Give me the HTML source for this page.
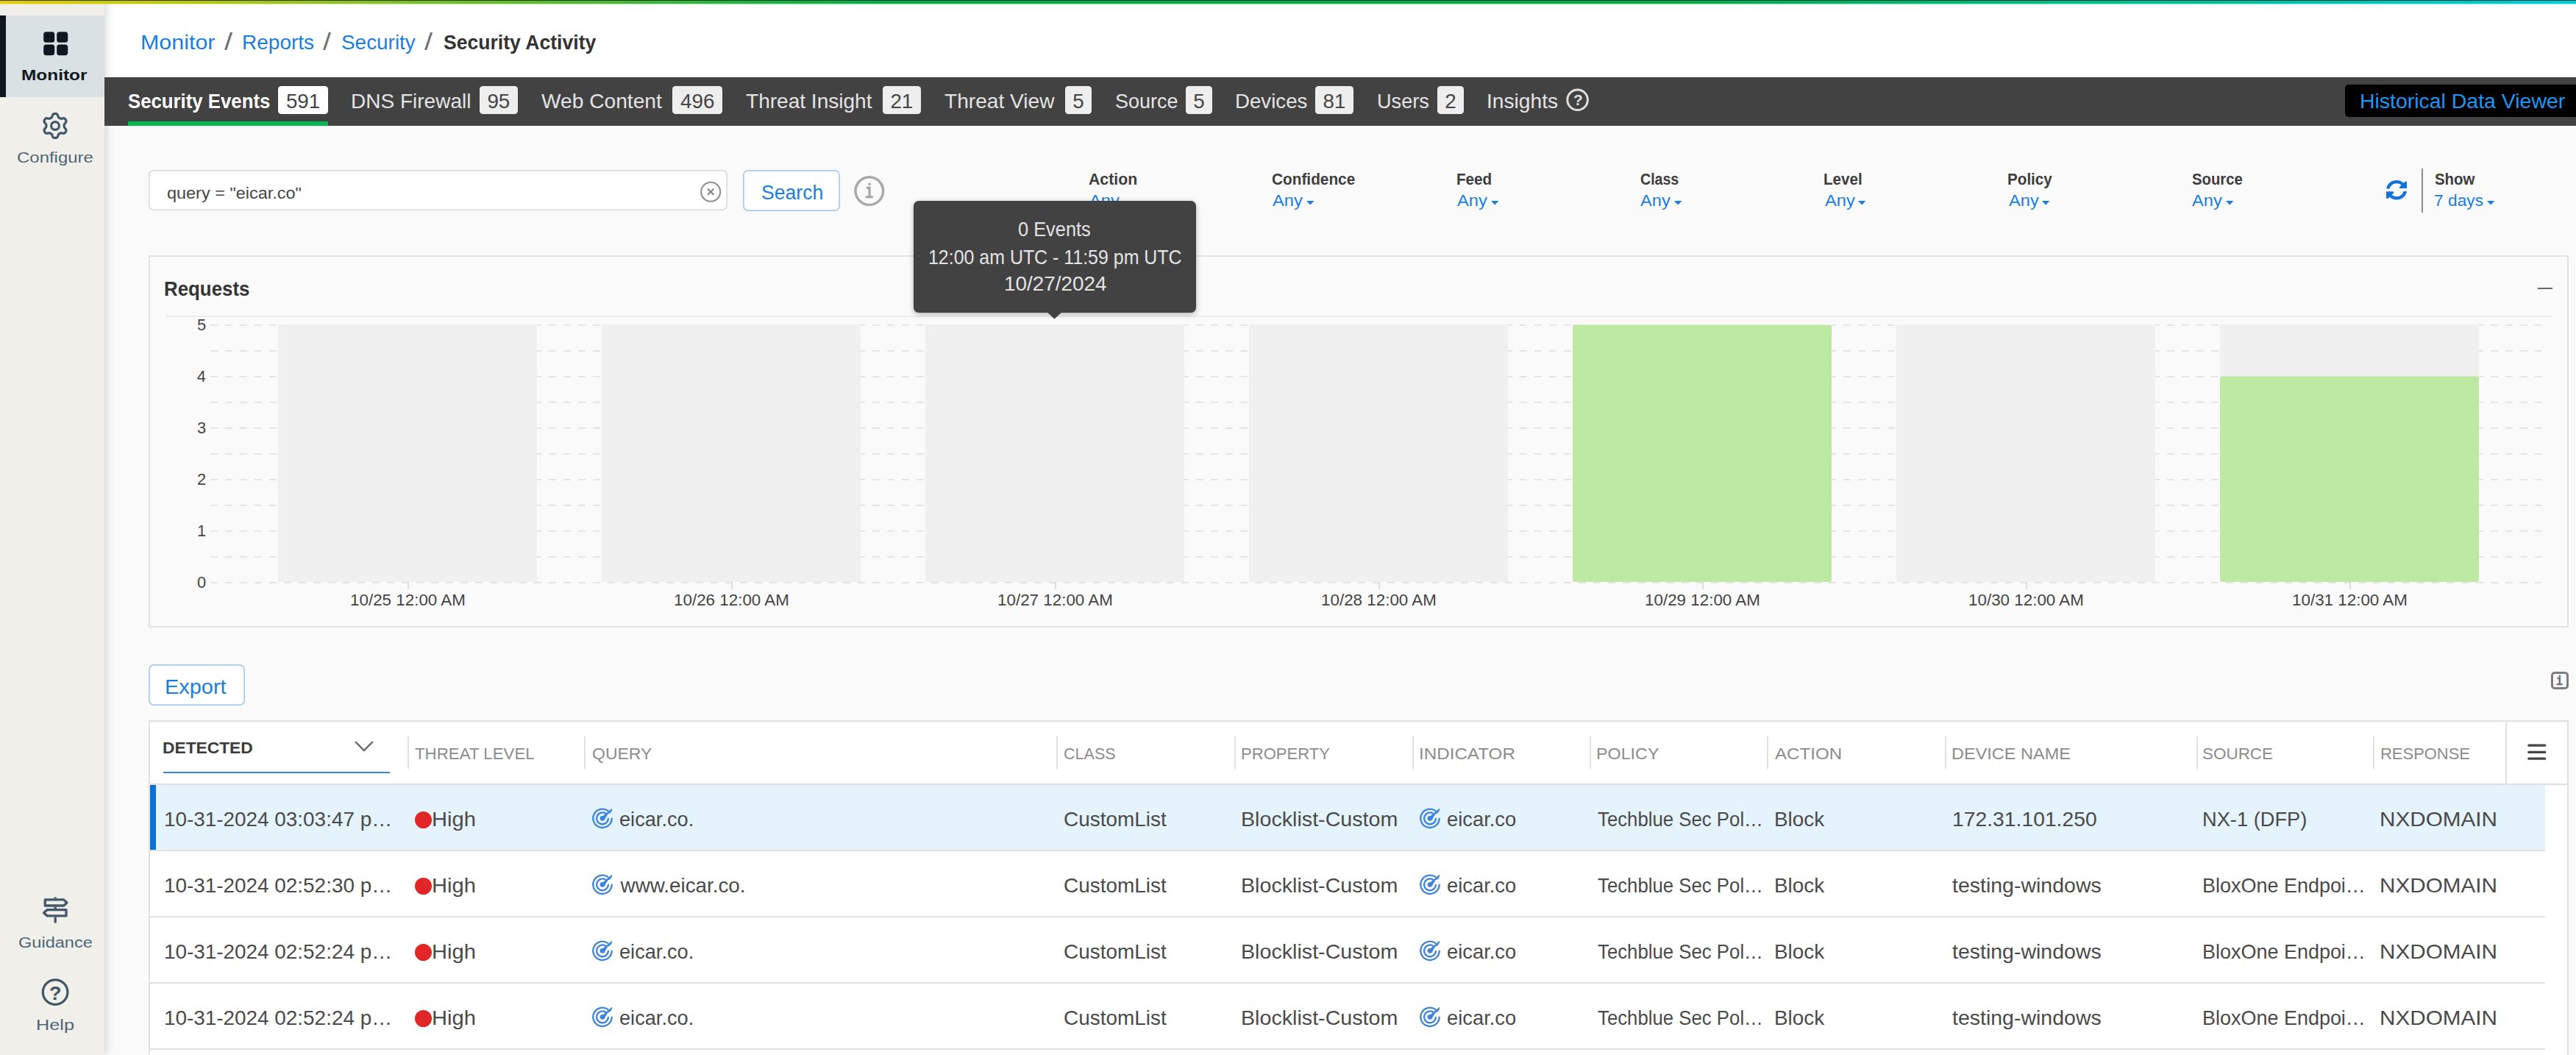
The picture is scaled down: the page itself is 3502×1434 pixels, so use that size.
<!DOCTYPE html>
<html lang="en"><head><meta charset="utf-8"><title>Security Activity</title>
<style>
html,body{margin:0;padding:0}
body{width:3502px;height:1434px;position:relative;overflow:hidden;background:#fafafa;font-family:"Liberation Sans",sans-serif}
.abs{position:absolute;display:block}
.t{position:absolute;white-space:nowrap;line-height:1;transform-origin:0 0;display:block;text-decoration:none;font-weight:400}
b.t{font-weight:700}
#topbar{position:absolute;left:0;top:0;width:3502px;height:5px;z-index:40;background:linear-gradient(90deg,#e8cf00 0%,#00b04a 34%,#00b04a 65%,#00ced6 100%)}
#topbar:before{content:"";position:absolute;left:0;top:5px;width:100%;height:1px;opacity:.38;background:linear-gradient(90deg,#e8cf00 0%,#00b04a 34%,#00b04a 65%,#00ced6 100%)}
#topbar:after{content:"";position:absolute;left:0;top:0;width:100%;height:1px;background:rgba(30,38,40,.85)}
#header{position:absolute;left:142px;top:0;width:3360px;height:105px;background:#fff}
#tabbar{position:absolute;left:142px;top:105px;width:3360px;height:66px;background:#424242}
#tabul{position:absolute;left:174px;top:164.6px;width:272px;height:6.4px;background:#00b74f}
.badge{position:absolute;top:117px;height:38px;border-radius:4.5px}
#hdv{position:absolute;left:3188px;top:115px;width:314px;height:44px;border-radius:5px 0 0 5px;background:#000}
#searchbox{position:absolute;left:202.2px;top:231.2px;width:787px;height:55.2px;box-sizing:border-box;border-radius:7px;background:#fff;box-shadow:inset 0 0 0 1.5px #d8d8d8}
#searchbtn{position:absolute;left:1010px;top:231.2px;width:131.8px;height:55.4px;border-radius:7px;background:#fff;box-shadow:inset 0 0 0 1.7px #a6ccf6}
#exportbtn{position:absolute;left:202.4px;top:903.2px;width:131px;height:55.4px;border-radius:7px;background:#fff;box-shadow:inset 0 0 0 1.7px #a6ccf6}
#panel{position:absolute;left:202px;top:347.2px;width:3290px;height:505.8px;background:#fafafa;box-shadow:inset 0 0 0 2px #e2e2e2}
#tip{position:absolute;left:1242.2px;top:273.2px;width:383.6px;height:151.6px;border-radius:7px;background:#424242;box-shadow:0 2px 7px rgba(0,0,0,.3);z-index:18}
#table{position:absolute;left:202px;top:979.2px;width:3290px;height:454.8px;background:#fff;box-shadow:inset 2px 2px 0 0 #e1e1e1,inset -2px 0 0 0 #e1e1e1}
#sidebar{position:absolute;left:0;top:0;width:142px;height:1434px;background:#f0efea;box-shadow:2px 0 11px rgba(0,0,0,.17);z-index:30}
#sbactive{position:absolute;left:0;top:20.8px;width:142px;height:111.5px;background:#d9e1e4;z-index:31}
</style></head>
<body>
<header class="grp" id="g-crumbs">
<div id="header"></div>
<a class="t" style="left:190.6px;top:44.1px;font-size:27.81px;color:#1a7de0;transform:scaleX(1.095);">Monitor</a>
<span class="t" style="left:305.4px;top:41.3px;font-size:32.96px;color:#707070;transform:scaleX(1.200);">/</span>
<a class="t" style="left:329.4px;top:44.1px;font-size:27.81px;color:#1a7de0;transform:scaleX(1.008);">Reports</a>
<span class="t" style="left:439.4px;top:41.3px;font-size:32.96px;color:#707070;transform:scaleX(1.200);">/</span>
<a class="t" style="left:464.1px;top:44.1px;font-size:27.81px;color:#1a7de0;transform:scaleX(1.004);">Security</a>
<span class="t" style="left:577.4px;top:41.3px;font-size:32.96px;color:#707070;transform:scaleX(1.200);">/</span>
<b class="t" style="left:602.6px;top:44.1px;font-size:27.81px;color:#333;transform:scaleX(0.956);">Security Activity</b>
</header>
<nav class="grp" id="g-tabs">
<div id="tabbar"></div>
<div id="tabul"></div>
<div class="badge" style="left:378px;width:68.0px;background:#fff"></div>
<div class="badge" style="left:652px;width:52.0px;background:#eee"></div>
<div class="badge" style="left:914px;width:68.0px;background:#eee"></div>
<div class="badge" style="left:1200px;width:52.0px;background:#eee"></div>
<div class="badge" style="left:1447.7px;width:36.3px;background:#eee"></div>
<div class="badge" style="left:1611.7px;width:36.3px;background:#eee"></div>
<div class="badge" style="left:1787.6px;width:52.4px;background:#eee"></div>
<div class="badge" style="left:1954px;width:36.0px;background:#eee"></div>
<div id="hdv"></div>
<svg class="abs" style="left:2124px;top:115px" width="42" height="42" viewBox="0 0 42 42"><circle cx="20.6" cy="20.8" r="13.8" fill="none" stroke="#dedede" stroke-width="3"/></svg>
<span class="t" style="left:173.6px;top:124.0px;font-size:27.81px;color:#fff;transform:scaleX(0.927);font-weight:700;">Security Events</span>
<span class="t" style="left:388.9px;top:124.0px;font-size:27.81px;color:#454545;">591</span>
<span class="t" style="left:476.8px;top:124.0px;font-size:27.81px;color:#e4e4e4;transform:scaleX(1.008);">DNS Firewall</span>
<span class="t" style="left:662.4px;top:124.0px;font-size:27.81px;color:#454545;">95</span>
<span class="t" style="left:736.0px;top:124.0px;font-size:27.81px;color:#e4e4e4;transform:scaleX(1.013);">Web Content</span>
<span class="t" style="left:925.1px;top:124.0px;font-size:27.81px;color:#454545;">496</span>
<span class="t" style="left:1014.1px;top:124.0px;font-size:27.81px;color:#e4e4e4;transform:scaleX(1.009);">Threat Insight</span>
<span class="t" style="left:1210.4px;top:124.0px;font-size:27.81px;color:#454545;">21</span>
<span class="t" style="left:1284.1px;top:124.0px;font-size:27.81px;color:#e4e4e4;transform:scaleX(1.012);">Threat View</span>
<span class="t" style="left:1458.2px;top:124.0px;font-size:27.81px;color:#454545;">5</span>
<span class="t" style="left:1516.2px;top:124.0px;font-size:27.81px;color:#e4e4e4;transform:scaleX(0.970);">Source</span>
<span class="t" style="left:1622.2px;top:124.0px;font-size:27.81px;color:#454545;">5</span>
<span class="t" style="left:1678.8px;top:124.0px;font-size:27.81px;color:#e4e4e4;transform:scaleX(0.995);">Devices</span>
<span class="t" style="left:1798.5px;top:124.0px;font-size:27.81px;color:#454545;">81</span>
<span class="t" style="left:1872.3px;top:124.0px;font-size:27.81px;color:#e4e4e4;transform:scaleX(0.976);">Users</span>
<span class="t" style="left:1964.2px;top:124.0px;font-size:27.81px;color:#454545;">2</span>
<span class="t" style="left:2020.8px;top:124.0px;font-size:27.81px;color:#e4e4e4;transform:scaleX(1.013);">Insights</span>
<span class="t" style="left:2138.8px;top:125.7px;font-size:20.5px;color:#e0e0e0;transform:scaleX(1.019);font-weight:700;">?</span>
<a class="t" style="left:3207.5px;top:123.9px;font-size:27.81px;color:#2196f3;transform:scaleX(1.023);">Historical Data Viewer</a>
</nav>
<section class="grp" id="g-filters">
<div id="searchbox"></div>
<svg class="abs" style="left:946px;top:240px" width="42" height="42" viewBox="0 0 42 42"><circle cx="20.2" cy="20.7" r="13" fill="none" stroke="#909090" stroke-width="2.1"/><path d="M16.1 16.6 L24.3 24.8 M24.3 16.6 L16.1 24.8" stroke="#8a8a8a" stroke-width="2.2" fill="none"/></svg>
<div id="searchbtn"></div>
<svg class="abs" style="left:1156px;top:234px" width="52" height="52" viewBox="0 0 52 52"><circle cx="25.8" cy="25.6" r="18.8" fill="none" stroke="#a8a8a8" stroke-width="3.4"/></svg>
<svg class="abs" style="left:1526.1px;top:273.2px" width="10.4" height="5.6" viewBox="0 0 10.4 5.6"><path d="M0 0 H10.4 L5.2 5.6 Z" fill="#1a7de0"/></svg>
<svg class="abs" style="left:1775.8px;top:273.2px" width="10.4" height="5.6" viewBox="0 0 10.4 5.6"><path d="M0 0 H10.4 L5.2 5.6 Z" fill="#1a7de0"/></svg>
<svg class="abs" style="left:2026.6px;top:273.2px" width="10.4" height="5.6" viewBox="0 0 10.4 5.6"><path d="M0 0 H10.4 L5.2 5.6 Z" fill="#1a7de0"/></svg>
<svg class="abs" style="left:2275.9px;top:273.2px" width="10.4" height="5.6" viewBox="0 0 10.4 5.6"><path d="M0 0 H10.4 L5.2 5.6 Z" fill="#1a7de0"/></svg>
<svg class="abs" style="left:2526.3px;top:273.2px" width="10.4" height="5.6" viewBox="0 0 10.4 5.6"><path d="M0 0 H10.4 L5.2 5.6 Z" fill="#1a7de0"/></svg>
<svg class="abs" style="left:2776.2px;top:273.2px" width="10.4" height="5.6" viewBox="0 0 10.4 5.6"><path d="M0 0 H10.4 L5.2 5.6 Z" fill="#1a7de0"/></svg>
<svg class="abs" style="left:3026.0px;top:273.2px" width="10.4" height="5.6" viewBox="0 0 10.4 5.6"><path d="M0 0 H10.4 L5.2 5.6 Z" fill="#1a7de0"/></svg>
<svg class="abs" style="left:3380.5px;top:273.2px" width="10.4" height="5.6" viewBox="0 0 10.4 5.6"><path d="M0 0 H10.4 L5.2 5.6 Z" fill="#1a7de0"/></svg>
<svg class="abs" style="left:3244px;top:245.2px" width="28.2" height="26.4" viewBox="8 8 496 496" preserveAspectRatio="none"><path d="M370.72 133.28C339.458 104.008 298.888 87.962 255.848 88c-77.458.068-144.328 53.178-162.791 126.85-1.344 5.363-6.122 9.15-11.651 9.15H24.103c-7.498 0-13.194-6.807-11.807-14.176C33.933 94.924 134.813 8 256 8c66.448 0 126.791 26.136 171.315 68.685L463.03 40.97C478.149 25.851 504 36.559 504 57.941V192c0 13.255-10.745 24-24 24H345.941c-21.382 0-32.09-25.851-16.971-40.971l41.75-41.749zM32 296h134.059c21.382 0 32.09 25.851 16.971 40.971l-41.75 41.75c31.262 29.273 71.835 45.319 114.876 45.28 77.418-.07 144.315-53.144 162.787-126.849 1.344-5.363 6.122-9.15 11.651-9.15h57.304c7.498 0 13.194 6.807 11.807 14.176C478.067 417.076 377.187 504 256 504c-66.448 0-126.791-26.136-171.315-68.685L48.97 471.03C33.851 486.149 8 475.441 8 454.059V320c0-13.255 10.745-24 24-24z" fill="#1173da"/></svg>
<div class="abs" style="left:3292.3px;top:229px;width:1.8px;height:59.5px;background:#8c8c8c"></div>
<span class="t" style="left:226.6px;top:250.6px;font-size:22.66px;color:#454545;transform:scaleX(1.035);">query = "eicar.co"</span>
<span class="t" style="left:1034.7px;top:248.3px;font-size:27.81px;color:#1a7de0;transform:scaleX(0.957);">Search</span>
<span class="t" style="left:1176.4px;top:249.3px;font-size:26.8px;color:#a4a4a4;transform:scaleX(0.702);font-weight:700;font-family:'Liberation Mono',monospace;-webkit-text-stroke:0.5px #a4a4a4;">i</span>
<span class="t" style="left:1480.0px;top:232.5px;font-size:22.45px;color:#3d3d3d;transform:scaleX(0.948);font-weight:700;">Action</span>
<span class="t" style="left:1480.5px;top:262.1px;font-size:22.45px;color:#1a7de0;transform:scaleX(1.055);">Any</span>
<span class="t" style="left:1729.4px;top:232.5px;font-size:22.45px;color:#3d3d3d;transform:scaleX(0.927);font-weight:700;">Confidence</span>
<span class="t" style="left:1730.2px;top:262.1px;font-size:22.45px;color:#1a7de0;transform:scaleX(1.055);">Any</span>
<span class="t" style="left:1979.6px;top:232.5px;font-size:22.45px;color:#3d3d3d;transform:scaleX(0.919);font-weight:700;">Feed</span>
<span class="t" style="left:1981.0px;top:262.1px;font-size:22.45px;color:#1a7de0;transform:scaleX(1.055);">Any</span>
<span class="t" style="left:2229.5px;top:232.5px;font-size:22.45px;color:#3d3d3d;transform:scaleX(0.872);font-weight:700;">Class</span>
<span class="t" style="left:2230.3px;top:262.1px;font-size:22.45px;color:#1a7de0;transform:scaleX(1.055);">Any</span>
<span class="t" style="left:2479.3px;top:232.5px;font-size:22.45px;color:#3d3d3d;transform:scaleX(0.921);font-weight:700;">Level</span>
<span class="t" style="left:2480.7px;top:262.1px;font-size:22.45px;color:#1a7de0;transform:scaleX(1.055);">Any</span>
<span class="t" style="left:2729.2px;top:232.5px;font-size:22.45px;color:#3d3d3d;transform:scaleX(0.920);font-weight:700;">Policy</span>
<span class="t" style="left:2730.6px;top:262.1px;font-size:22.45px;color:#1a7de0;transform:scaleX(1.055);">Any</span>
<span class="t" style="left:2979.9px;top:232.5px;font-size:22.45px;color:#3d3d3d;transform:scaleX(0.903);font-weight:700;">Source</span>
<span class="t" style="left:2980.4px;top:262.1px;font-size:22.45px;color:#1a7de0;transform:scaleX(1.055);">Any</span>
<span class="t" style="left:3309.5px;top:232.5px;font-size:22.45px;color:#3d3d3d;transform:scaleX(0.909);font-weight:700;">Show</span>
<span class="t" style="left:3308.9px;top:262.1px;font-size:22.45px;color:#1a7de0;transform:scaleX(1.014);">7 days</span>
</section>
<section class="grp" id="g-chart">
<div id="panel"></div>
<div class="abs" style="left:224.5px;top:429.3px;width:3245.5px;height:1.9px;background:#ececec"></div>
<div class="abs" style="left:3449.5px;top:391.2px;width:20.5px;height:1.8px;background:#666"></div>
<svg class="abs" style="left:0;top:430px" width="3502" height="380" viewBox="0 430 3502 380"><line x1="286" y1="441.8" x2="3456" y2="441.8" stroke="#e2e2e2" stroke-width="1.7" stroke-dasharray="10 10"/><line x1="286" y1="476.8" x2="3456" y2="476.8" stroke="#e2e2e2" stroke-width="1.7" stroke-dasharray="10 10"/><line x1="286" y1="511.8" x2="3456" y2="511.8" stroke="#e2e2e2" stroke-width="1.7" stroke-dasharray="10 10"/><line x1="286" y1="546.8" x2="3456" y2="546.8" stroke="#e2e2e2" stroke-width="1.7" stroke-dasharray="10 10"/><line x1="286" y1="581.8" x2="3456" y2="581.8" stroke="#e2e2e2" stroke-width="1.7" stroke-dasharray="10 10"/><line x1="286" y1="616.8" x2="3456" y2="616.8" stroke="#e2e2e2" stroke-width="1.7" stroke-dasharray="10 10"/><line x1="286" y1="651.8" x2="3456" y2="651.8" stroke="#e2e2e2" stroke-width="1.7" stroke-dasharray="10 10"/><line x1="286" y1="686.8" x2="3456" y2="686.8" stroke="#e2e2e2" stroke-width="1.7" stroke-dasharray="10 10"/><line x1="286" y1="721.8" x2="3456" y2="721.8" stroke="#e2e2e2" stroke-width="1.7" stroke-dasharray="10 10"/><line x1="286" y1="756.8" x2="3456" y2="756.8" stroke="#e2e2e2" stroke-width="1.7" stroke-dasharray="10 10"/><line x1="286" y1="791.8" x2="3456" y2="791.8" stroke="#e2e2e2" stroke-width="1.7" stroke-dasharray="10 10"/><rect x="378" y="441" width="352" height="350" fill="#f0f0f0"/><line x1="555" y1="791.8" x2="555" y2="801" stroke="#d4d4d4" stroke-width="1.5"/><rect x="818" y="441" width="352" height="350" fill="#f0f0f0"/><line x1="995" y1="791.8" x2="995" y2="801" stroke="#d4d4d4" stroke-width="1.5"/><rect x="1258" y="441" width="352" height="350" fill="#f0f0f0"/><line x1="1435" y1="791.8" x2="1435" y2="801" stroke="#d4d4d4" stroke-width="1.5"/><rect x="1698" y="441" width="352" height="350" fill="#f0f0f0"/><line x1="1875" y1="791.8" x2="1875" y2="801" stroke="#d4d4d4" stroke-width="1.5"/><rect x="2138" y="441" width="352" height="350" fill="#f0f0f0"/><line x1="2315" y1="791.8" x2="2315" y2="801" stroke="#d4d4d4" stroke-width="1.5"/><rect x="2578" y="441" width="352" height="350" fill="#f0f0f0"/><line x1="2755" y1="791.8" x2="2755" y2="801" stroke="#d4d4d4" stroke-width="1.5"/><rect x="3018" y="441" width="352" height="350" fill="#f0f0f0"/><line x1="3195" y1="791.8" x2="3195" y2="801" stroke="#d4d4d4" stroke-width="1.5"/><rect x="2138" y="441.5" width="352" height="349.5" rx="3.5" fill="#bde9a2"/><rect x="3018" y="511.5" width="352" height="279.5" rx="3.5" fill="#bde9a2"/></svg>
<span class="t" style="left:223.4px;top:378.8px;font-size:27.81px;color:#333;transform:scaleX(0.930);font-weight:700;">Requests</span>
<span class="t" style="left:267.9px;top:431.0px;font-size:21.8px;color:#444;">5</span>
<span class="t" style="left:267.7px;top:501.0px;font-size:21.8px;color:#444;">4</span>
<span class="t" style="left:268.0px;top:571.0px;font-size:21.8px;color:#444;">3</span>
<span class="t" style="left:268.1px;top:641.0px;font-size:21.8px;color:#444;">2</span>
<span class="t" style="left:268.1px;top:711.0px;font-size:21.8px;color:#444;">1</span>
<span class="t" style="left:267.9px;top:781.0px;font-size:21.8px;color:#444;">0</span>
<span class="t" style="left:476.0px;top:805.2px;font-size:22.4px;color:#444;">10/25 12:00 AM</span>
<span class="t" style="left:916.0px;top:805.2px;font-size:22.4px;color:#444;">10/26 12:00 AM</span>
<span class="t" style="left:1356.0px;top:805.2px;font-size:22.4px;color:#444;">10/27 12:00 AM</span>
<span class="t" style="left:1796.0px;top:805.2px;font-size:22.4px;color:#444;">10/28 12:00 AM</span>
<span class="t" style="left:2236.0px;top:805.2px;font-size:22.4px;color:#444;">10/29 12:00 AM</span>
<span class="t" style="left:2676.0px;top:805.2px;font-size:22.4px;color:#444;">10/30 12:00 AM</span>
<span class="t" style="left:3116.0px;top:805.2px;font-size:22.4px;color:#444;">10/31 12:00 AM</span>
</section>
<div class="grp" id="g-toolbar">
<div id="exportbtn"></div>
<div class="abs" style="left:3467.8px;top:912.6px;width:24.2px;height:24.1px;box-sizing:border-box;border:3px solid #7e7e7e;border-radius:5px"></div>
<span class="t" style="left:224.3px;top:920.3px;font-size:27.81px;color:#1a7de0;transform:scaleX(1.040);">Export</span>
<span class="t" style="left:3475.1px;top:916.6px;font-size:18.8px;color:#6e6e6e;transform:scaleX(0.792);font-weight:700;font-family:'Liberation Mono',monospace;-webkit-text-stroke:0.5px #6e6e6e;">i</span>
</div>
<section class="grp" id="g-events">
<div id="table"></div>
<div class="abs" style="left:204px;top:1065px;width:3286px;height:1.8px;background:#dfdfdf"></div>
<div class="abs" style="left:3406px;top:981px;width:2px;height:84px;background:#e1e1e1"></div>
<div class="abs" style="left:204px;top:1066.8px;width:3256px;height:88.2px;background:#e5f3fd"></div>
<div class="abs" style="left:204px;top:1066.8px;width:8px;height:88.2px;background:#0b6fdc"></div>
<div class="abs" style="left:204px;top:1155.0px;width:3256px;height:2px;background:#e1e1e1"></div>
<div class="abs" style="left:204px;top:1245.0px;width:3256px;height:2px;background:#e1e1e1"></div>
<div class="abs" style="left:204px;top:1335.0px;width:3256px;height:2px;background:#e1e1e1"></div>
<div class="abs" style="left:204px;top:1425.0px;width:3256px;height:2px;background:#e1e1e1"></div>
<div class="abs" style="left:553.7px;top:1001px;width:2px;height:44px;background:#e1e1e1"></div>
<div class="abs" style="left:794.1px;top:1001px;width:2px;height:44px;background:#e1e1e1"></div>
<div class="abs" style="left:1435.9px;top:1001px;width:2px;height:44px;background:#e1e1e1"></div>
<div class="abs" style="left:1678.1px;top:1001px;width:2px;height:44px;background:#e1e1e1"></div>
<div class="abs" style="left:1920.1px;top:1001px;width:2px;height:44px;background:#e1e1e1"></div>
<div class="abs" style="left:2160.6px;top:1001px;width:2px;height:44px;background:#e1e1e1"></div>
<div class="abs" style="left:2402.1px;top:1001px;width:2px;height:44px;background:#e1e1e1"></div>
<div class="abs" style="left:2643.9px;top:1001px;width:2px;height:44px;background:#e1e1e1"></div>
<div class="abs" style="left:2986.0px;top:1001px;width:2px;height:44px;background:#e1e1e1"></div>
<div class="abs" style="left:3226.2px;top:1001px;width:2px;height:44px;background:#e1e1e1"></div>
<div class="abs" style="left:222px;top:1048.5px;width:308px;height:2.8px;background:#2f88e3"></div>
<svg class="abs" style="left:478px;top:1003px" width="34" height="24" viewBox="0 0 34 24"><path d="M5 5.2 L16.9 17 L28.8 5.2" fill="none" stroke="#6a6a6a" stroke-width="2.4"/></svg>
<svg class="abs" style="left:3436px;top:1010px" width="26" height="24" viewBox="0 0 26 24"><path d="M1.8 3.2 H23.8 M1.8 12.4 H23.8 M1.8 21.2 H23.8" stroke="#444" stroke-width="3.2" stroke-linecap="round" fill="none"/></svg>
<div class="abs" style="left:563.9px;top:1103.3px;width:23px;height:23px;border-radius:50%;background:#e02626"></div>
<svg class="abs" style="left:804.9px;top:1098.2px" width="29" height="29" viewBox="0 0 29 29"><path d="M26.69 14.74 A12.7 12.7 0 1 1 21.28 3.90" fill="none" stroke="#3f84dc" stroke-width="2.35" stroke-linecap="round"/><path d="M21.87 14.99 A7.9 7.9 0 1 1 17.95 7.46" fill="none" stroke="#3f84dc" stroke-width="2.35" stroke-linecap="round"/><circle cx="14" cy="14.3" r="3.4" fill="#3f84dc"/><path d="M13.2 13.2 L26.6 1.6 C26.6 5 24 7.6 21 8 L16.2 16 Z" fill="#3f84dc" stroke="#3f84dc" stroke-width="1.2" stroke-linejoin="round"/></svg>
<svg class="abs" style="left:1929.5px;top:1098.2px" width="29" height="29" viewBox="0 0 29 29"><path d="M26.69 14.74 A12.7 12.7 0 1 1 21.28 3.90" fill="none" stroke="#3f84dc" stroke-width="2.35" stroke-linecap="round"/><path d="M21.87 14.99 A7.9 7.9 0 1 1 17.95 7.46" fill="none" stroke="#3f84dc" stroke-width="2.35" stroke-linecap="round"/><circle cx="14" cy="14.3" r="3.4" fill="#3f84dc"/><path d="M13.2 13.2 L26.6 1.6 C26.6 5 24 7.6 21 8 L16.2 16 Z" fill="#3f84dc" stroke="#3f84dc" stroke-width="1.2" stroke-linejoin="round"/></svg>
<div class="abs" style="left:563.9px;top:1193.3px;width:23px;height:23px;border-radius:50%;background:#e02626"></div>
<svg class="abs" style="left:804.9px;top:1188.2px" width="29" height="29" viewBox="0 0 29 29"><path d="M26.69 14.74 A12.7 12.7 0 1 1 21.28 3.90" fill="none" stroke="#3f84dc" stroke-width="2.35" stroke-linecap="round"/><path d="M21.87 14.99 A7.9 7.9 0 1 1 17.95 7.46" fill="none" stroke="#3f84dc" stroke-width="2.35" stroke-linecap="round"/><circle cx="14" cy="14.3" r="3.4" fill="#3f84dc"/><path d="M13.2 13.2 L26.6 1.6 C26.6 5 24 7.6 21 8 L16.2 16 Z" fill="#3f84dc" stroke="#3f84dc" stroke-width="1.2" stroke-linejoin="round"/></svg>
<svg class="abs" style="left:1929.5px;top:1188.2px" width="29" height="29" viewBox="0 0 29 29"><path d="M26.69 14.74 A12.7 12.7 0 1 1 21.28 3.90" fill="none" stroke="#3f84dc" stroke-width="2.35" stroke-linecap="round"/><path d="M21.87 14.99 A7.9 7.9 0 1 1 17.95 7.46" fill="none" stroke="#3f84dc" stroke-width="2.35" stroke-linecap="round"/><circle cx="14" cy="14.3" r="3.4" fill="#3f84dc"/><path d="M13.2 13.2 L26.6 1.6 C26.6 5 24 7.6 21 8 L16.2 16 Z" fill="#3f84dc" stroke="#3f84dc" stroke-width="1.2" stroke-linejoin="round"/></svg>
<div class="abs" style="left:563.9px;top:1283.3px;width:23px;height:23px;border-radius:50%;background:#e02626"></div>
<svg class="abs" style="left:804.9px;top:1278.2px" width="29" height="29" viewBox="0 0 29 29"><path d="M26.69 14.74 A12.7 12.7 0 1 1 21.28 3.90" fill="none" stroke="#3f84dc" stroke-width="2.35" stroke-linecap="round"/><path d="M21.87 14.99 A7.9 7.9 0 1 1 17.95 7.46" fill="none" stroke="#3f84dc" stroke-width="2.35" stroke-linecap="round"/><circle cx="14" cy="14.3" r="3.4" fill="#3f84dc"/><path d="M13.2 13.2 L26.6 1.6 C26.6 5 24 7.6 21 8 L16.2 16 Z" fill="#3f84dc" stroke="#3f84dc" stroke-width="1.2" stroke-linejoin="round"/></svg>
<svg class="abs" style="left:1929.5px;top:1278.2px" width="29" height="29" viewBox="0 0 29 29"><path d="M26.69 14.74 A12.7 12.7 0 1 1 21.28 3.90" fill="none" stroke="#3f84dc" stroke-width="2.35" stroke-linecap="round"/><path d="M21.87 14.99 A7.9 7.9 0 1 1 17.95 7.46" fill="none" stroke="#3f84dc" stroke-width="2.35" stroke-linecap="round"/><circle cx="14" cy="14.3" r="3.4" fill="#3f84dc"/><path d="M13.2 13.2 L26.6 1.6 C26.6 5 24 7.6 21 8 L16.2 16 Z" fill="#3f84dc" stroke="#3f84dc" stroke-width="1.2" stroke-linejoin="round"/></svg>
<div class="abs" style="left:563.9px;top:1373.3px;width:23px;height:23px;border-radius:50%;background:#e02626"></div>
<svg class="abs" style="left:804.9px;top:1368.2px" width="29" height="29" viewBox="0 0 29 29"><path d="M26.69 14.74 A12.7 12.7 0 1 1 21.28 3.90" fill="none" stroke="#3f84dc" stroke-width="2.35" stroke-linecap="round"/><path d="M21.87 14.99 A7.9 7.9 0 1 1 17.95 7.46" fill="none" stroke="#3f84dc" stroke-width="2.35" stroke-linecap="round"/><circle cx="14" cy="14.3" r="3.4" fill="#3f84dc"/><path d="M13.2 13.2 L26.6 1.6 C26.6 5 24 7.6 21 8 L16.2 16 Z" fill="#3f84dc" stroke="#3f84dc" stroke-width="1.2" stroke-linejoin="round"/></svg>
<svg class="abs" style="left:1929.5px;top:1368.2px" width="29" height="29" viewBox="0 0 29 29"><path d="M26.69 14.74 A12.7 12.7 0 1 1 21.28 3.90" fill="none" stroke="#3f84dc" stroke-width="2.35" stroke-linecap="round"/><path d="M21.87 14.99 A7.9 7.9 0 1 1 17.95 7.46" fill="none" stroke="#3f84dc" stroke-width="2.35" stroke-linecap="round"/><circle cx="14" cy="14.3" r="3.4" fill="#3f84dc"/><path d="M13.2 13.2 L26.6 1.6 C26.6 5 24 7.6 21 8 L16.2 16 Z" fill="#3f84dc" stroke="#3f84dc" stroke-width="1.2" stroke-linejoin="round"/></svg>
<span class="t" style="left:221.1px;top:1005.0px;font-size:22.66px;color:#3c3c3c;transform:scaleX(1.005);font-weight:700;">DETECTED</span>
<span class="t" style="left:563.8px;top:1012.7px;font-size:22.66px;color:#8c8c8c;transform:scaleX(0.984);">THREAT LEVEL</span>
<span class="t" style="left:804.6px;top:1012.7px;font-size:22.66px;color:#8c8c8c;transform:scaleX(1.015);">QUERY</span>
<span class="t" style="left:1446.3px;top:1012.7px;font-size:22.66px;color:#8c8c8c;transform:scaleX(0.952);">CLASS</span>
<span class="t" style="left:1687.2px;top:1012.7px;font-size:22.66px;color:#8c8c8c;transform:scaleX(0.974);">PROPERTY</span>
<span class="t" style="left:1928.6px;top:1012.7px;font-size:22.66px;color:#8c8c8c;transform:scaleX(1.068);">INDICATOR</span>
<span class="t" style="left:2170.1px;top:1012.7px;font-size:22.66px;color:#8c8c8c;transform:scaleX(1.028);">POLICY</span>
<span class="t" style="left:2413.0px;top:1012.7px;font-size:22.66px;color:#8c8c8c;transform:scaleX(1.065);">ACTION</span>
<span class="t" style="left:2653.0px;top:1012.7px;font-size:22.66px;color:#8c8c8c;transform:scaleX(1.037);">DEVICE NAME</span>
<span class="t" style="left:2994.4px;top:1012.7px;font-size:22.66px;color:#8c8c8c;transform:scaleX(0.991);">SOURCE</span>
<span class="t" style="left:3235.5px;top:1012.7px;font-size:22.66px;color:#8c8c8c;transform:scaleX(0.969);">RESPONSE</span>
<span class="t" style="left:222.5px;top:1100.2px;font-size:27.81px;color:#4a4a4a;transform:scaleX(1.003);">10-31-2024 03:03:47 p…</span>
<span class="t" style="left:586.9px;top:1100.2px;font-size:27.81px;color:#4a4a4a;transform:scaleX(1.047);">High</span>
<span class="t" style="left:842.3px;top:1100.2px;font-size:27.81px;color:#4a4a4a;transform:scaleX(0.978);">eicar.co.</span>
<span class="t" style="left:1446.0px;top:1100.2px;font-size:27.81px;color:#4a4a4a;transform:scaleX(1.005);">CustomList</span>
<span class="t" style="left:1686.8px;top:1100.2px;font-size:27.81px;color:#4a4a4a;transform:scaleX(1.031);">Blocklist-Custom</span>
<span class="t" style="left:1967.1px;top:1100.2px;font-size:27.81px;color:#4a4a4a;transform:scaleX(0.984);">eicar.co</span>
<span class="t" style="left:2171.6px;top:1100.2px;font-size:27.81px;color:#4a4a4a;transform:scaleX(0.927);">Techblue Sec Pol…</span>
<span class="t" style="left:2412.0px;top:1100.2px;font-size:27.81px;color:#4a4a4a;transform:scaleX(1.002);">Block</span>
<span class="t" style="left:2653.8px;top:1100.2px;font-size:27.81px;color:#4a4a4a;transform:scaleX(1.018);">172.31.101.250</span>
<span class="t" style="left:2994.1px;top:1100.2px;font-size:27.81px;color:#4a4a4a;transform:scaleX(0.980);">NX-1 (DFP)</span>
<span class="t" style="left:3235.4px;top:1100.2px;font-size:27.81px;color:#4a4a4a;transform:scaleX(1.068);">NXDOMAIN</span>
<span class="t" style="left:222.5px;top:1190.2px;font-size:27.81px;color:#4a4a4a;transform:scaleX(1.003);">10-31-2024 02:52:30 p…</span>
<span class="t" style="left:586.9px;top:1190.2px;font-size:27.81px;color:#4a4a4a;transform:scaleX(1.047);">High</span>
<span class="t" style="left:843.6px;top:1190.2px;font-size:27.81px;color:#4a4a4a;">www.eicar.co.</span>
<span class="t" style="left:1446.0px;top:1190.2px;font-size:27.81px;color:#4a4a4a;transform:scaleX(1.005);">CustomList</span>
<span class="t" style="left:1686.8px;top:1190.2px;font-size:27.81px;color:#4a4a4a;transform:scaleX(1.031);">Blocklist-Custom</span>
<span class="t" style="left:1967.1px;top:1190.2px;font-size:27.81px;color:#4a4a4a;transform:scaleX(0.984);">eicar.co</span>
<span class="t" style="left:2171.6px;top:1190.2px;font-size:27.81px;color:#4a4a4a;transform:scaleX(0.927);">Techblue Sec Pol…</span>
<span class="t" style="left:2412.0px;top:1190.2px;font-size:27.81px;color:#4a4a4a;transform:scaleX(1.002);">Block</span>
<span class="t" style="left:2654.0px;top:1190.2px;font-size:27.81px;color:#4a4a4a;transform:scaleX(1.025);">testing-windows</span>
<span class="t" style="left:2994.1px;top:1190.2px;font-size:27.81px;color:#4a4a4a;transform:scaleX(0.970);">BloxOne Endpoi…</span>
<span class="t" style="left:3235.4px;top:1190.2px;font-size:27.81px;color:#4a4a4a;transform:scaleX(1.068);">NXDOMAIN</span>
<span class="t" style="left:222.5px;top:1280.2px;font-size:27.81px;color:#4a4a4a;transform:scaleX(1.003);">10-31-2024 02:52:24 p…</span>
<span class="t" style="left:586.9px;top:1280.2px;font-size:27.81px;color:#4a4a4a;transform:scaleX(1.047);">High</span>
<span class="t" style="left:842.3px;top:1280.2px;font-size:27.81px;color:#4a4a4a;transform:scaleX(0.978);">eicar.co.</span>
<span class="t" style="left:1446.0px;top:1280.2px;font-size:27.81px;color:#4a4a4a;transform:scaleX(1.005);">CustomList</span>
<span class="t" style="left:1686.8px;top:1280.2px;font-size:27.81px;color:#4a4a4a;transform:scaleX(1.031);">Blocklist-Custom</span>
<span class="t" style="left:1967.1px;top:1280.2px;font-size:27.81px;color:#4a4a4a;transform:scaleX(0.984);">eicar.co</span>
<span class="t" style="left:2171.6px;top:1280.2px;font-size:27.81px;color:#4a4a4a;transform:scaleX(0.927);">Techblue Sec Pol…</span>
<span class="t" style="left:2412.0px;top:1280.2px;font-size:27.81px;color:#4a4a4a;transform:scaleX(1.002);">Block</span>
<span class="t" style="left:2654.0px;top:1280.2px;font-size:27.81px;color:#4a4a4a;transform:scaleX(1.025);">testing-windows</span>
<span class="t" style="left:2994.1px;top:1280.2px;font-size:27.81px;color:#4a4a4a;transform:scaleX(0.970);">BloxOne Endpoi…</span>
<span class="t" style="left:3235.4px;top:1280.2px;font-size:27.81px;color:#4a4a4a;transform:scaleX(1.068);">NXDOMAIN</span>
<span class="t" style="left:222.5px;top:1370.2px;font-size:27.81px;color:#4a4a4a;transform:scaleX(1.003);">10-31-2024 02:52:24 p…</span>
<span class="t" style="left:586.9px;top:1370.2px;font-size:27.81px;color:#4a4a4a;transform:scaleX(1.047);">High</span>
<span class="t" style="left:842.3px;top:1370.2px;font-size:27.81px;color:#4a4a4a;transform:scaleX(0.978);">eicar.co.</span>
<span class="t" style="left:1446.0px;top:1370.2px;font-size:27.81px;color:#4a4a4a;transform:scaleX(1.005);">CustomList</span>
<span class="t" style="left:1686.8px;top:1370.2px;font-size:27.81px;color:#4a4a4a;transform:scaleX(1.031);">Blocklist-Custom</span>
<span class="t" style="left:1967.1px;top:1370.2px;font-size:27.81px;color:#4a4a4a;transform:scaleX(0.984);">eicar.co</span>
<span class="t" style="left:2171.6px;top:1370.2px;font-size:27.81px;color:#4a4a4a;transform:scaleX(0.927);">Techblue Sec Pol…</span>
<span class="t" style="left:2412.0px;top:1370.2px;font-size:27.81px;color:#4a4a4a;transform:scaleX(1.002);">Block</span>
<span class="t" style="left:2654.0px;top:1370.2px;font-size:27.81px;color:#4a4a4a;transform:scaleX(1.025);">testing-windows</span>
<span class="t" style="left:2994.1px;top:1370.2px;font-size:27.81px;color:#4a4a4a;transform:scaleX(0.970);">BloxOne Endpoi…</span>
<span class="t" style="left:3235.4px;top:1370.2px;font-size:27.81px;color:#4a4a4a;transform:scaleX(1.068);">NXDOMAIN</span>
</section>
<div class="grp" id="g-tooltip">
<div id="tip"></div>
<svg class="abs" style="left:1423.4px;top:424.3px;z-index:19" width="21" height="10" viewBox="0 0 21 10"><path d="M0 0 H21 L10.5 9.6 Z" fill="#424242"/></svg>
<span class="t" style="left:1384.4px;top:298.3px;font-size:27.81px;color:#e4e4e4;transform:scaleX(0.913);z-index:20;">0 Events</span>
<span class="t" style="left:1262.3px;top:336.4px;font-size:27.81px;color:#e4e4e4;transform:scaleX(0.897);z-index:20;">12:00 am UTC - 11:59 pm UTC</span>
<span class="t" style="left:1365.1px;top:372.4px;font-size:27.81px;color:#e4e4e4;transform:scaleX(1.003);z-index:20;">10/27/2024</span>
</div>
<nav class="grp" id="g-sidenav">
<div id="sidebar"></div>
<div id="sbactive"></div>
<div class="abs" style="left:142px;top:105px;width:26px;height:66px;background:#424242;z-index:31"></div>
<div class="abs" style="left:0;top:20.8px;width:7.8px;height:111.5px;background:#10151f;z-index:31"></div>
<svg class="abs" style="left:58.6px;top:42.8px;z-index:32" width="34" height="33" viewBox="0 0 34 33"><rect x="0.2" y="0.2" width="15" height="14.6" rx="3.6" fill="#111722"/><rect x="0.2" y="17.6" width="15" height="14.6" rx="3.6" fill="#111722"/><rect x="18.2" y="0.2" width="15" height="14.6" rx="3.6" fill="#111722"/><rect x="18.2" y="17.6" width="15" height="14.6" rx="3.6" fill="#111722"/></svg>
<svg class="abs" style="left:55px;top:151.4px;z-index:32" width="40" height="40" viewBox="0 0 40 40"><path d="M32.1 20.0L32.1 20.6L32.2 21.3L32.4 22.0L32.9 22.7L33.8 23.7L34.6 24.8L35.0 25.8L34.9 26.7L34.7 27.5L34.3 28.2L33.8 29.0L33.2 29.6L32.5 30.1L31.4 30.3L30.1 30.1L28.8 29.8L27.9 29.7L27.2 29.9L26.6 30.2L26.1 30.5L25.5 30.8L25.0 31.2L24.5 31.7L24.1 32.6L23.7 33.8L23.2 35.1L22.5 35.9L21.7 36.3L20.9 36.4L20.0 36.5L19.1 36.4L18.3 36.3L17.5 35.9L16.8 35.1L16.3 33.8L15.9 32.6L15.5 31.7L15.0 31.2L14.5 30.8L14.0 30.5L13.4 30.2L12.8 29.9L12.1 29.7L11.2 29.8L9.9 30.1L8.6 30.3L7.5 30.1L6.8 29.6L6.2 29.0L5.7 28.2L5.3 27.5L5.1 26.7L5.0 25.8L5.4 24.8L6.2 23.7L7.1 22.7L7.6 22.0L7.8 21.3L7.9 20.6L7.9 20.0L7.9 19.4L7.8 18.7L7.6 18.0L7.1 17.3L6.2 16.3L5.4 15.2L5.0 14.2L5.1 13.3L5.3 12.5L5.7 11.8L6.2 11.0L6.8 10.4L7.5 9.9L8.6 9.7L9.9 9.9L11.2 10.2L12.1 10.3L12.8 10.1L13.4 9.8L13.9 9.5L14.5 9.2L15.0 8.8L15.5 8.3L15.9 7.4L16.3 6.2L16.8 4.9L17.5 4.1L18.3 3.7L19.1 3.6L20.0 3.5L20.9 3.6L21.7 3.7L22.5 4.1L23.2 4.9L23.7 6.2L24.1 7.4L24.5 8.3L25.0 8.8L25.5 9.2L26.1 9.5L26.6 9.8L27.2 10.1L27.9 10.3L28.8 10.2L30.1 9.9L31.4 9.7L32.5 9.9L33.2 10.4L33.8 11.0L34.3 11.8L34.7 12.5L34.9 13.3L35.0 14.2L34.6 15.2L33.8 16.3L32.9 17.3L32.4 18.0L32.2 18.7L32.1 19.4Z" fill="none" stroke="#42586a" stroke-width="3.2" stroke-linejoin="round"/><circle cx="20" cy="20" r="5.4" fill="none" stroke="#42586a" stroke-width="3.2"/></svg>
<svg class="abs" style="left:56px;top:1217px;z-index:32" width="40" height="40" viewBox="0 0 40 40"><g fill="none" stroke="#42586a" stroke-width="3.3" stroke-linejoin="round"><path d="M19.2 2.4 V4.3 M19.2 15.6 V18.1 M19.2 29.4 V37.4"/><path d="M5.3 5.9 H30.6 L35 9.95 L30.6 14 H5.3 Z"/><path d="M34 19.7 H8 L3.6 23.75 L8 27.8 H34 Z"/></g></svg>
<svg class="abs" style="left:55px;top:1329.4px;z-index:32" width="40" height="40" viewBox="0 0 40 40"><circle cx="20.1" cy="19.6" r="16.8" fill="none" stroke="#3f5666" stroke-width="3.2"/></svg>
<span class="t" style="left:29.3px;top:91.2px;font-size:21.12px;color:#111722;transform:scaleX(1.157);font-weight:700;z-index:32;">Monitor</span>
<span class="t" style="left:22.9px;top:203.0px;font-size:21.12px;color:#4d6677;transform:scaleX(1.135);z-index:32;">Configure</span>
<span class="t" style="left:24.5px;top:1269.7px;font-size:21.12px;color:#4d6677;transform:scaleX(1.115);z-index:32;">Guidance</span>
<span class="t" style="left:67.3px;top:1337.2px;font-size:26px;color:#3f5666;transform:scaleX(1.035);font-weight:700;z-index:32;">?</span>
<span class="t" style="left:49.2px;top:1381.5px;font-size:21.12px;color:#4d6677;transform:scaleX(1.196);z-index:32;">Help</span>
</nav>
<div class="grp" id="g-brandbar">
<div id="topbar"></div>
</div>
</body></html>
